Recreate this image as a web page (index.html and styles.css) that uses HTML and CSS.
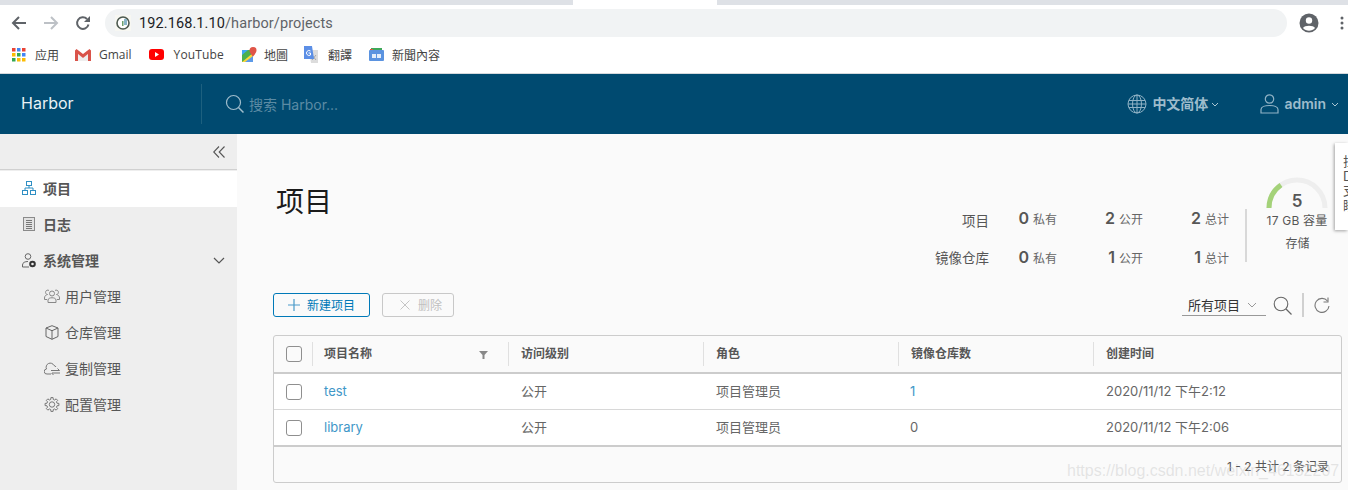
FILE: index.html
```html
<!DOCTYPE html>
<html lang="zh">
<head>
<meta charset="utf-8">
<title>Harbor</title>
<link rel="stylesheet" href="styles.css">
</head>
<body>
<div class="tabstrip"><div class="tab-gap-left"></div><div class="tab-active"></div><div class="tab-gap-right"></div></div>
<div class="toolbar">
  <svg class="tb-back" width="16" height="14" viewBox="0 0 16 14"><path d="M15 7H2M8 1 2 7l6 6" fill="none" stroke="#5f6368" stroke-width="2"/></svg>
  <svg class="tb-fwd" width="16" height="14" viewBox="0 0 16 14"><path d="M1 7h13M8 1l6 6-6 6" fill="none" stroke="#bdc1c6" stroke-width="2"/></svg>
  <svg class="tb-reload" width="16" height="16" viewBox="0 0 16 16"><path d="M13.500 9.500A5.800 5.800 0 1 1 12 4" fill="none" stroke="#5f6368" stroke-width="2"/><path d="M15 1v6H9z" fill="#5f6368"/></svg>
  <div class="omnibox">
    <svg class="favicon" width="16" height="16" viewBox="0 0 16 16"><rect width="16" height="16" fill="#f7f7f2"/><circle cx="8" cy="8" r="6" fill="#fff" stroke="#4d5a50" stroke-width="1.600"/><path d="M9 4h3v6H9z" fill="#8ab6c9"/><path d="M7 6h1.500v5H7z" fill="#6da06d"/></svg>
    <span class="url">192.168.1.10<span class="url-path">/harbor/projects</span></span>
  </div>
  <svg class="tb-avatar" width="20" height="20" viewBox="0 0 20 20"><circle cx="10" cy="10" r="9.500" fill="#5f6368"/><circle cx="10" cy="7.500" r="3.200" fill="#fff"/><path d="M4 15c1.500-3 10.500-3 12 0-3 3.500-9 3.500-12 0z" fill="#fff"/></svg>
  <svg class="tb-menu" width="4" height="14" viewBox="0 0 4 14"><circle cx="2" cy="2" r="1.500" fill="#5f6368"/><circle cx="2" cy="7" r="1.500" fill="#5f6368"/><circle cx="2" cy="12" r="1.500" fill="#5f6368"/></svg>
</div>
<div class="bookmarks">
  <span class="bm bm-apps">
    <svg width="14" height="14" viewBox="0 0 14 14"><g><rect x="0" y="0" width="3.500" height="3.500" fill="#ea4335"/><rect x="5" y="0" width="3.500" height="3.500" fill="#4285f4"/><rect x="10" y="0" width="3.500" height="3.500" fill="#ea4335"/><rect x="0" y="5" width="3.500" height="3.500" fill="#fbbc05"/><rect x="5" y="5" width="3.500" height="3.500" fill="#34a853"/><rect x="10" y="5" width="3.500" height="3.500" fill="#4285f4"/><rect x="0" y="10" width="3.500" height="3.500" fill="#34a853"/><rect x="5" y="10" width="3.500" height="3.500" fill="#fbbc05"/><rect x="10" y="10" width="3.500" height="3.500" fill="#fbbc05"/></g></svg>应用</span>
  <span class="bm bm-gmail">
    <svg width="16" height="12" viewBox="0 0 16 12"><path d="M3 5v7h10V5L8 9z" fill="#eee"/><path d="M0 1.500V12h3V5l5 4 5-4v7h3V1.500L14.500 0 8 5 1.500 0z" fill="#d9534a"/></svg>Gmail</span>
  <span class="bm bm-yt">
    <svg width="15" height="11" viewBox="0 0 15 11"><rect width="15" height="11" rx="3" fill="#f00"/><path d="M6 3v5l4-2.500z" fill="#fff"/></svg><span class="yt-label">YouTube</span></span>
  <span class="bm bm-maps">
    <svg width="15" height="16" viewBox="0 0 15 16"><path d="M0 3h11v12H0z" fill="#4caf50"/><path d="M0 15 11 6v9z" fill="#fdd835"/><path d="M3 15 11 9v6z" fill="#5c9ae8"/><path d="M0 3h6L0 8z" fill="#42a5f5"/><path d="M11 0a3.500 3.500 0 0 1 3.500 3.500C14.500 6 11 9.500 11 9.500S7.500 6 7.500 3.500A3.500 3.500 0 0 1 11 0z" fill="#e05548"/></svg>地圖</span>
  <span class="bm bm-tr">
    <svg width="15" height="17" viewBox="0 0 15 17"><path d="M6 4h9v13H8z" fill="#dcdcdc"/><path d="M9 9l4 5M13 9l-4 5" stroke="#999" stroke-width=".8"/><path d="M1 0h8l2 13H1z" fill="#5c8fe6"/><path d="M7.500 5A2.500 2.500 0 1 0 7.500 9V7H5.500" fill="none" stroke="#fff"/></svg>翻譯</span>
  <span class="bm bm-news">
    <svg width="15" height="13" viewBox="0 0 15 13"><path d="M2 0h11v5H2z" fill="#3ea85a"/><path d="M1 1h3v4H1z" fill="#e05548"/><rect x="0" y="2" width="15" height="11" rx="1" fill="#5b93e0"/><rect x="3" y="6" width="4" height="4" fill="#e3edfa"/><rect x="8" y="6" width="4" height="4" fill="#e3edfa"/></svg>新聞內容</span>
</div>
<header class="app-header">
  <div class="brand">Harbor</div>
  <div class="search">
    <svg width="20" height="20" viewBox="0 0 20 20"><circle cx="8.500" cy="8.500" r="7" fill="none" stroke="#9fbdcc" stroke-width="1.200"/><path d="m13.500 13.500 5 5" stroke="#9fbdcc" stroke-width="1.500"/></svg>
    <span class="search-text">搜索 Harbor...</span>
  </div>
  <div class="lang">
    <svg width="20" height="20" viewBox="0 0 20 20" fill="none" stroke="#8fb2c5" stroke-width="1"><circle cx="10" cy="10" r="9"/><ellipse cx="10" cy="10" rx="4.500" ry="9"/><path d="M10 1v18M2 6.500h16M2 13.500h16M1 10h18"/></svg>
    <span class="hd-label">中文简体</span>
    <svg class="chev" width="8" height="5" viewBox="0 0 8 5"><path d="m1 1 3 3 3-3" fill="none" stroke="#a9c5d4"/></svg>
  </div>
  <div class="user">
    <svg width="19" height="20" viewBox="0 0 19 20" fill="none" stroke="#8fb2c5" stroke-width="1.200"><circle cx="9.500" cy="5" r="4.200"/><path d="M1 19v-3.500C1 13 5 11.500 9.500 11.500S18 13 18 15.500V19z"/></svg>
    <span class="hd-label">admin</span>
    <svg class="chev" width="8" height="5" viewBox="0 0 8 5"><path d="m1 1 3 3 3-3" fill="none" stroke="#a9c5d4"/></svg>
  </div>
</header>
<div class="shell">
  <aside class="sidebar">
    <div class="collapse"><svg width="12" height="12" viewBox="0 0 12 12"><path d="M6 .5.700 6 6 11.500M11.500.5 6.200 6l5.300 5.500" fill="none" stroke="#555" stroke-width="1.100"/></svg></div>
    <nav class="nav">
      <a class="nav-item active">
        <svg width="14" height="14" viewBox="0 0 14 14" fill="none" stroke="#2f8fc4"><rect x="4.500" y=".5" width="5" height="4"/><rect x=".5" y="9.500" width="5" height="4"/><rect x="8.500" y="9.500" width="5" height="4"/><path d="M7 4.500V7M3 9.500V7h8v2.500"/></svg>
        项目</a>
      <a class="nav-item">
        <svg width="14" height="14" viewBox="0 0 14 14"><rect x="1.500" y=".5" width="11" height="13" fill="#e2e2e2" stroke="#8a8a8a"/><path d="M4 3.500h6M4 5.500h6M4 7.500h6M4 9.500h6M4 11.500h6" stroke="#777"/></svg>
        日志</a>
      <a class="nav-item has-chev">
        <svg width="14" height="15" viewBox="0 0 14 15" fill="none" stroke="#666"><circle cx="6" cy="3.500" r="2.800"/><path d="M.5 14v-2C.5 9.500 3 8.500 6 8.500"/><path d="M.5 14H7"/><circle cx="10.500" cy="11" r="2.300" stroke="#333" stroke-width="2"/></svg>
        系统管理
        <svg class="nav-chev" width="12" height="7" viewBox="0 0 12 7"><path d="m1 1 5 5 5-5" fill="none" stroke="#555" stroke-width="1.200"/></svg>
      </a>
      <a class="nav-sub">
        <svg width="16" height="14" viewBox="0 0 16 14" fill="none" stroke="#888"><circle cx="8" cy="4.500" r="2.500"/><path d="M4 13.500V11c0-3 8-3 8 0v2.500z"/><path d="M5 1.500a2.200 2.200 0 1 0-1.500 4C1.800 6 .5 7 .5 9v1.500H3M11 1.500a2.200 2.200 0 1 1 1.500 4c1.700.5 3 1.500 3 3.500v1.500H13"/></svg>
        用户管理</a>
      <a class="nav-sub">
        <svg width="16" height="15" viewBox="0 0 16 15" fill="none" stroke="#666"><path d="M8 .7 14 3v8.500L8 14.300 2 11.500V3zM2 3l6 2.700L14 3M8 5.700v8.600"/></svg>
        仓库管理</a>
      <a class="nav-sub">
        <svg width="16" height="13" viewBox="0 0 16 13" fill="none" stroke="#777"><path d="M7 12H3A2.500 2.500 0 0 1 2.500 7 4 4 0 0 1 10 3.500 3 3 0 0 1 12 5M7 8.500h8.500M13.500 6.500l2 2M8 11h8M9.500 13l-2-2"/></svg>
        复制管理</a>
      <a class="nav-sub">
        <svg width="16" height="15" viewBox="0 0 15 15" fill="none" stroke="#777"><circle cx="7.500" cy="7.500" r="2.700"/><path d="M12.550 6.240 14.410 6.410V8.590L12.550 8.760 11.960 10.180 13.160 11.610 11.610 13.160 10.180 11.960 8.760 12.550 8.590 14.410H6.410L6.240 12.550 4.820 11.960 3.390 13.160 1.840 11.610 3.040 10.180 2.450 8.760 .59 8.590V6.410L2.450 6.240 3.040 4.820 1.840 3.390 3.390 1.840 4.820 3.040 6.240 2.450 6.410.59H8.590L8.760 2.450 10.180 3.040 11.610 1.840 13.160 3.390 11.960 4.820z"/></svg>
        配置管理</a>
    </nav>
  </aside>
  <main class="content">
    <div class="head-row">
      <h1 class="title">项目</h1>
      <div class="summary">
        <div class="stats">
          <span class="st-label">项目</span>
          <span class="st up"><b>0</b> 私有</span>
          <span class="st up"><b>2</b> 公开</span>
          <span class="st up"><b>2</b> 总计</span>
          <span class="st-label">镜像仓库</span>
          <span class="st"><b>0</b> 私有</span>
          <span class="st"><b>1</b> 公开</span>
          <span class="st"><b>1</b> 总计</span>
        </div>
        <span class="st-divider"></span>
        <div class="storage">
          <div class="gauge">
            <svg width="62" height="31" viewBox="0 0 62 31" fill="none" stroke-width="5"><path d="M3 31a28 28 0 0 1 56 0" stroke="#eeeeee"/><path d="M3 31A28 28 0 0 1 15 8" stroke="#a4d279"/></svg>
            <span class="gauge-num">5</span>
          </div>
          <div class="cap">17 GB 容量</div>
          <div class="cap-label">存储</div>
        </div>
      </div>
    </div>
    <div class="action-row">
      <button class="btn btn-new"><svg width="12" height="12" viewBox="0 0 12 12"><path d="M6 0v12M0 6h12" stroke="#4a9ac9" stroke-width="1.200"/></svg>新建项目</button>
      <button class="btn btn-del"><svg width="10" height="10" viewBox="0 0 10 10"><path d="m.5.5 9 9M9.500.5l-9 9" stroke="#c4c4c4"/></svg>删除</button>
      <div class="filters">
        <div class="select">所有项目<svg width="10" height="6" viewBox="0 0 10 6"><path d="m1 1 4 4 4-4" fill="none" stroke="#999"/></svg></div>
        <svg width="19" height="19" viewBox="0 0 19 19" fill="none" stroke="#666"><circle cx="8" cy="8" r="6.800" stroke-width="1.100"/><path d="m13 13 5.500 5.500" stroke-width="1.300"/></svg>
        <span class="v-sep"></span>
        <svg width="16" height="16" viewBox="0 0 16 16" fill="none" stroke="#777"><path d="M13.500 4A7 7 0 1 0 15 9" stroke-width="1.100"/><path d="M14 .5V5H9.500" stroke-width="1.100"/></svg>
      </div>
    </div>
    <div class="grid">
      <div class="row head">
        <div class="cell check"><i class="cb"></i></div>
        <div class="cell sep name">项目名称<svg class="filter" width="9" height="8" viewBox="0 0 9 8"><path d="M0 0h9L5.500 4v4h-2V4z" fill="#888"/></svg></div>
        <div class="cell sep">访问级别</div>
        <div class="cell sep">角色</div>
        <div class="cell sep">镜像仓库数</div>
        <div class="cell sep">创建时间</div>
      </div>
      <div class="row body">
        <div class="cell check"><i class="cb"></i></div>
        <div class="cell link">test</div>
        <div class="cell text">公开</div>
        <div class="cell text">项目管理员</div>
        <div class="cell link">1</div>
        <div class="cell text">2020/11/12 下午2:12</div>
      </div>
      <div class="row body last">
        <div class="cell check"><i class="cb"></i></div>
        <div class="cell link">library</div>
        <div class="cell text">公开</div>
        <div class="cell text">项目管理员</div>
        <div class="cell">0</div>
        <div class="cell text">2020/11/12 下午2:06</div>
      </div>
      <div class="grid-foot">1 - 2 共计 2 条记录</div>
    </div>
  </main>
</div>
<div class="side-tab"><span>拉</span><span>D</span><span>支</span><span>睡</span></div>
<div class="watermark">https://blog.csdn.net/weixin_46152207</div>
</body>
</html>
```
FILE: styles.css
```css
* { box-sizing: border-box; }
html, body { margin: 0; height: 490px; overflow: hidden; }
body { font-family: "Inter", "Noto Sans CJK SC", sans-serif; background: #fff; color: #565656; position: relative; }
.tabstrip { display: flex; height: 5px; }
.tab-gap-left { width: 573px; background: #dee1e6; }
.tab-active { width: 144px; background: #fff; }
.tab-gap-right { flex: 1; background: #dee1e6; }
.toolbar { height: 32px; display: flex; align-items: center; padding-left: 11px; padding-top: 4px; }
.tb-fwd { margin-left: 16px; }
.tb-reload { margin-left: 16px; }
.omnibox { margin-left: 14px; width: 1182px; height: 28px; border-radius: 14px; background: #f1f3f4; display: flex; align-items: center; padding-left: 10px; }
.url { margin-left: 8px; font: 14.500px "Roboto", sans-serif; color: #202124; letter-spacing: .1px; }
.url-path { color: #5f6368; }
.tb-avatar { margin-left: 12px; }
.tb-menu { margin-left: 21px; }
.bookmarks { height: 37px; display: flex; align-items: center; border-bottom: 1px solid #d5d8dc; font: 12px "Open Sans", "Noto Sans CJK SC", sans-serif; color: #444; padding-left: 12px; padding-bottom: 1px; }
.bm { display: inline-flex; align-items: center; gap: 8px; }
.bm-apps { gap: 9px; }
.bm-gmail { margin-left: 16px; }
.bm-yt { margin-left: 17px; gap: 10px; }
.yt-label { letter-spacing: .14px; }
.bm-maps { margin-left: 18px; gap: 7px; }
.bm-tr { margin-left: 15px; gap: 10px; }
.bm-news { margin-left: 17px; }
.app-header { height: 60px; background: #004a70; display: flex; align-items: center; color: #9dbccc; }
.brand { width: 202px; height: 40px; line-height: 38px; padding-left: 21px; font-size: 16px; color: #e8f1f5; border-right: 1px solid #1d607f; }
.search { display: flex; align-items: center; margin-left: 23px; gap: 4px; flex: 1; }
.search-text { font-size: 14px; color: #5c8ba4; }
.lang, .user { display: flex; align-items: center; font-size: 14px; font-weight: 600; }
.hd-label { padding-bottom: 2px; }
.lang { gap: 5px; }
.lang .chev { margin-left: -2px; }
.user { margin-left: 41px; margin-right: 9px; gap: 5px; }
.user .chev { margin-left: 0; }
.shell { display: flex; height: 356px; }
.sidebar { width: 237px; background: #eeeeee; flex: none; }
.collapse { height: 36px; border-bottom: 1px solid #d0d0d0; display: flex; justify-content: flex-end; align-items: center; padding-right: 12px; }
.nav { margin-top: 1px; }
.nav-item, .nav-sub { height: 36px; display: flex; align-items: center; color: #565656; font-size: 14px; padding-bottom: 2px; }
.nav-item { padding-left: 22px; gap: 7px; font-weight: 700; }
.nav-item.active { background: #fff; }
.nav-chev { margin-left: auto; margin-right: 12px; }
.nav-sub { padding-left: 44px; gap: 5px; }
.content { flex: 1; background: #fafafa; padding: 0 6px 0 36px; }
.head-row { display: flex; justify-content: space-between; height: 159px; }
.title { margin: 50px 0 0 3px; font-size: 28px; font-weight: 400; line-height: 36px; color: #1b1b1b; }
.summary { display: flex; align-items: flex-start; margin-right: 4px; }
.stats { display: grid; grid-template-columns: 76px 68px 86px 86px; grid-auto-rows: 37px; margin-top: 67px; font-size: 13.500px; align-items: center; justify-items: end; }
.st-label { white-space: nowrap; color: #565656; }
.st { font-size: 12px; display: flex; align-items: baseline; gap: 4px; color: #666; }
.st.up { margin-bottom: 4px; }
.st b { font-size: 16px; color: #565656; font-weight: 600; }
.st-divider { width: 2px; height: 53px; margin: 75px 0 0 16px; background: #d8d8d8; }
.storage { width: 82px; margin-left: 9px; display: flex; flex-direction: column; align-items: center; margin-top: 43px; }
.gauge { width: 62px; height: 31px; position: relative; }
.gauge svg { display: block; }
.gauge-num { position: absolute; left: 0; right: 0; top: 14px; text-align: center; font-size: 17px; font-weight: 600; line-height: 20px; }
.cap { font-size: 12px; line-height: 18px; margin-top: 4px; white-space: nowrap; letter-spacing: .2px; }
.cap-label { font-size: 12px; line-height: 18px; margin-top: 5px; padding-left: 1px; }
.action-row { display: flex; align-items: center; height: 24px; gap: 12px; }
.btn { height: 24px; border-radius: 3px; background: transparent; font: 12px "Inter", "Noto Sans CJK SC", sans-serif; display: inline-flex; align-items: center; padding: 0 0 1px; }
.btn-new { width: 97px; border: 1px solid #0079b8; color: #0079b8; padding-left: 14px; gap: 7px; }
.btn-del { width: 72px; border: 1px solid #c8c8c8; color: #c0c0c0; padding-left: 17px; gap: 8px; }
.filters { margin-left: auto; display: flex; align-items: center; margin-right: 12px; }
.select { width: 84px; height: 22px; border-bottom: 1px solid #999; font-size: 13px; color: #333; padding-left: 6px; display: flex; align-items: center; gap: 7px; margin-right: 7px; }
.v-sep { width: 2px; height: 24px; background: #d0d0d0; margin: 0 10px 0 10px; }
.grid { margin-top: 18px; height: 148px; border: 1px solid #cccccc; border-radius: 3px; background: #fafafa; display: flex; flex-direction: column; }
.row { display: grid; grid-template-columns: 38px 196px 195px 195px 195px 1fr; align-items: center; }
.row.head { height: 38px; border-bottom: 2px solid #cccccc; font-size: 12px; font-weight: 700; color: #565656; }
.row.body { height: 36px; background: #fff; border-bottom: 1px solid #d8d8d8; font-size: 13px; color: #666; }
.row.body.last { height: 37px; border-bottom: 2px solid #cccccc; }
.cell { padding-left: 12px; height: 24px; line-height: 24px; position: relative; white-space: nowrap; }
.row.body .cell { line-height: 22px; }
.cell.text { padding-left: 13px; }
.cell.sep { border-left: 1px solid #e0e0e0; }
.cell.name { padding-left: 11px; }
.cell.name .filter { position: absolute; right: 20px; top: 9px; }
.cell.check { padding-left: 12px; display: flex; align-items: center; }
.cb { display: block; width: 16px; height: 16px; border: 1px solid #8f8f8f; border-radius: 3px; background: #fff; }
.head .cb { background: #fafafa; }
.link { color: #3f97c8; }
.grid-foot { flex: 1; display: flex; justify-content: flex-end; align-items: center; font-size: 12px; padding-right: 12px; color: #565656; padding-top: 1px; }
.side-tab { position: absolute; left: 1335px; top: 143px; width: 13px; height: 87px; background: #fff; box-shadow: -1px 1px 3px rgba(0,0,0,.35); display: flex; flex-direction: column; padding-top: 11px; font-size: 13px; line-height: 14.500px; padding-left: 8px; overflow: hidden; color: #555; }
.watermark { position: absolute; left: 1067px; top: 462px; font: 16px "Liberation Sans", sans-serif; color: rgba(190,190,190,.38); white-space: nowrap; }
```
